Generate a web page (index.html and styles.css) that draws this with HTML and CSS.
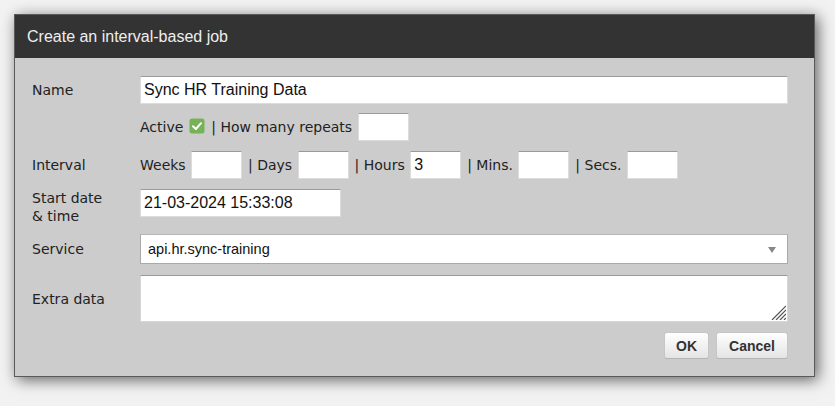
FILE: index.html
```html
<!DOCTYPE html>
<html>
<head>
<meta charset="utf-8">
<link rel="stylesheet" href="styles.css">
</head>
<body>
<div class="dialog">
  <div class="dlg-header">Create an interval-based job</div>
  <div class="dlg-body">
    <div class="row row-name">
      <label class="lbl">Name</label>
      <input class="inp inp-full" type="text" value="Sync HR Training Data">
    </div>
    <div class="row row-active">
      <span class="lbl"></span>
      <div class="line">Active <span class="check"><svg width="16" height="16" viewBox="0 0 16 16"><rect x="0.5" y="0.5" width="15" height="15" rx="2.5" fill="#77b255"/><path d="M4 8.3 L6.9 11 L12 5.2" fill="none" stroke="#fff" stroke-width="2" stroke-linecap="round" stroke-linejoin="round"/></svg></span> | How many repeats <input class="inp inp-small" type="text"></div>
    </div>
    <div class="row row-interval">
      <label class="lbl">Interval</label>
      <div class="line">Weeks <input class="inp inp-small" type="text"> | Days <input class="inp inp-small" type="text"> | Hours <input class="inp inp-small" type="text" value="3"> | Mins. <input class="inp inp-small" type="text"> | Secs. <input class="inp inp-small" type="text"></div>
    </div>
    <div class="row row-date">
      <label class="lbl lbl-wrap">Start date &amp; time</label>
      <input class="inp inp-date" type="text" value="21-03-2024 15:33:08">
    </div>
    <div class="row row-service">
      <label class="lbl">Service</label>
      <div class="select-wrap">
        <select class="sel"><option>api.hr.sync-training</option></select>
      </div>
    </div>
    <div class="row row-extra">
      <label class="lbl">Extra data</label>
      <div class="ta-wrap">
        <textarea class="ta"></textarea>
        <svg class="grip" width="16" height="16" viewBox="0 0 16 16"><g stroke="#555" stroke-width="1.2"><line x1="2" y1="16" x2="16" y2="2"/><line x1="6" y1="16" x2="16" y2="6"/><line x1="10" y1="16" x2="16" y2="10"/><line x1="14" y1="16" x2="16" y2="14"/></g></svg>
      </div>
    </div>
    <div class="buttons">
      <button class="btn">OK</button>
      <button class="btn">Cancel</button>
    </div>
  </div>
</div>
</body>
</html>
```

FILE: styles.css
```css
html, body {
  margin: 0;
  padding: 0;
  height: 100%;
}
body {
  box-sizing: border-box;
  min-height: 406px;
  background: #f2f2f2;
  padding: 14px 0 0 14px;
  font-family: "DejaVu Sans", Verdana, sans-serif;
  font-size: 14px;
  color: #222;
}
.dialog {
  width: 799px;
  border: 1px solid #5a5a5a;
  background: #cccccc;
  box-shadow: 3px 3px 14px rgba(0, 0, 0, 0.6);
}
.dlg-header {
  height: 43px;
  background: #333333;
  color: #eeeeee;
  font-family: "Liberation Sans", Arial, sans-serif;
  font-size: 16px;
  line-height: 43px;
  padding-left: 12px;
}
.dlg-body {
  padding: 18px 26px 17px 17px;
  display: flex;
  flex-direction: column;
}
.row {
  display: flex;
  align-items: center;
}
.row-name { margin-bottom: 9px; }
.row-active { margin-bottom: 10px; }
.row-interval { margin-bottom: 10px; }
.row-date { margin-bottom: 9px; align-items: flex-start; }
.row-service { margin-bottom: 11px; }
.row-extra { margin-bottom: 10px; }
.lbl {
  width: 108px;
  flex: none;
  line-height: 18px;
}
.lbl-wrap {
  width: 80px;
  margin-right: 28px;
}
.line {
  line-height: 28px;
  white-space: nowrap;
}
.inp {
  box-sizing: border-box;
  height: 28px;
  border: 1px solid #dcdcdc;
  border-top-color: #9a9a9a;
  background: #fff;
  padding: 0 3px;
  margin: 0;
  font-family: "Liberation Sans", Arial, sans-serif;
  font-size: 16px;
  color: #111;
  vertical-align: top;
  outline: none;
}
.inp-full {
  width: 648px;
}
.inp-small {
  width: 51px;
  margin: 0 1.5px 0 1px;
}
.inp-date {
  width: 201px;
  height: 28px;
}
.check {
  display: inline-block;
  width: 16px;
  height: 16px;
  margin: 0 2px 0 1px;
  vertical-align: -2px;
}
.check svg {
  display: block;
}
.select-wrap {
  position: relative;
  width: 648px;
}
.select-wrap::after {
  content: "";
  position: absolute;
  right: 12px;
  top: 13px;
  border-left: 4px solid transparent;
  border-right: 4px solid transparent;
  border-top: 6px solid #888;
}
.sel {
  -webkit-appearance: none;
  appearance: none;
  display: block;
  box-sizing: border-box;
  width: 648px;
  height: 30px;
  border: 1px solid #a9a9a9;
  border-top-color: #b5b5b5;
  border-radius: 0;
  background: #fff;
  padding: 0 7px;
  margin: 0;
  font-family: "Liberation Sans", Arial, sans-serif;
  font-size: 14.5px;
  color: #111;
  outline: none;
}
.ta-wrap {
  position: relative;
  width: 648px;
  height: 47px;
}
.ta {
  display: block;
  box-sizing: border-box;
  width: 648px;
  height: 47px;
  border: 1px solid #d6d6d6;
  border-top-color: #9a9a9a;
  background: #fff;
  resize: none;
  margin: 0;
  padding: 3px;
  outline: none;
}
.grip {
  position: absolute;
  right: 2px;
  bottom: 2px;
}
.buttons {
  display: flex;
  justify-content: flex-end;
  gap: 7px;
}
.btn {
  box-sizing: border-box;
  height: 27px;
  padding: 0 11px;
  border: 1px solid #c6c6c6;
  border-bottom-color: #b4b4b4;
  border-radius: 3px;
  background: linear-gradient(#ffffff, #e4e4e4);
  font-family: "Liberation Sans", Arial, sans-serif;
  font-size: 14px;
  font-weight: bold;
  color: #333;
  margin: 0;
}
.btn + .btn {
  padding: 0 12px;
}
```
